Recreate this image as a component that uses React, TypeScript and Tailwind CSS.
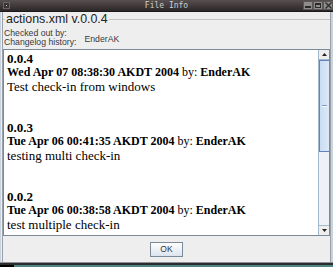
import React from "react";

const entries = [
  { version: "0.0.4", date: "Wed Apr 07 08:38:30 AKDT 2004", author: "EnderAK", message: "Test check-in from windows" },
  { version: "0.0.3", date: "Tue Apr 06 00:41:35 AKDT 2004", author: "EnderAK", message: "testing multi check-in" },
  { version: "0.0.2", date: "Tue Apr 06 00:38:58 AKDT 2004", author: "EnderAK", message: "test multiple check-in" },
];

function TitleBar() {
  return (
    <div className="relative h-[12px] bg-gradient-to-b from-[#585050] to-[#2c2727] border-b border-[#1c1a1a] flex items-center justify-center">
      <div className="absolute left-[3px] top-[2px] w-[7px] h-[7px] bg-[#3a3535] border border-[#6a6464] flex items-center justify-center">
        <div className="w-[1px] h-[1px] bg-[#cfcfcf]" />
      </div>
      <span className="font-['DejaVu_Sans_Mono',monospace] text-[8px] leading-none text-[#cfcfcf]">File Info</span>
      <div className="absolute right-0 top-[1px] flex">
        <div className="w-[10px] h-[9px] bg-[#8f8c8c] border border-[#5a5656] flex items-end justify-center pb-[1px]">
          <div className="w-[6px] h-[2px] bg-[#2a2a2a]" />
        </div>
        <div className="w-[10px] h-[9px] bg-[#8f8c8c] border border-[#5a5656] flex items-center justify-center">
          <div className="w-[6px] h-[5px] border border-[#2a2a2a] border-t-2" />
        </div>
        <div className="w-[10px] h-[9px] bg-[#8f8c8c] border border-[#5a5656] flex items-center justify-center">
          <svg width="7" height="7" viewBox="0 0 7 7">
            <path d="M0.5 0.5 L6.5 6.5 M6.5 0.5 L0.5 6.5" stroke="#2a2a2a" strokeWidth="1.3" />
          </svg>
        </div>
      </div>
    </div>
  );
}

function ScrollBar() {
  return (
    <div className="w-[11px] flex flex-col bg-[#eef2f7] border-l border-[#a3b8cc]">
      <div className="h-[10px] border-b border-[#a3b8cc] bg-[#eeeeee] flex items-center justify-center">
        <svg width="5" height="3" viewBox="0 0 5 3">
          <path d="M2.5 0 L5 3 L0 3 Z" fill="#222" />
        </svg>
      </div>
      <div className="h-[92px] bg-gradient-to-r from-[#c8ddf2] to-[#dde9f5] border-l border-y border-[#6382bf] flex items-center justify-center">
        <div className="w-[5px] h-[2px] border-t border-[#7f9ac6] border-b border-b-white" />
      </div>
      <div className="flex-1" />
      <div className="h-[10px] border-t border-[#a3b8cc] bg-[#eeeeee] flex items-center justify-center">
        <svg width="5" height="3" viewBox="0 0 5 3">
          <path d="M0 0 L5 0 L2.5 3 Z" fill="#222" />
        </svg>
      </div>
    </div>
  );
}

export default function App() {
  return (
    <div className="w-[333px] h-[267px] flex flex-col bg-[#eeeeee] overflow-hidden">
      <TitleBar />
      <div className="flex-1 flex">
        <div className="w-[3px] border-l border-[#c9d3df] border-r border-r-[#9aa0a8] bg-[#eeeeee]" />
        <div className="flex-1 flex flex-col">
          {/* titled border */}
          <div className="h-[15px] flex items-center">
            <div className="w-[2px] h-px bg-[#c4c4c4]" />
            <span className="px-[1px] font-['Liberation_Sans',sans-serif] text-[12.4px] leading-none text-[#222]">
              actions.xml v.0.0.4
            </span>
            <div className="flex-1 h-px bg-[#c4c4c4]" />
          </div>
          <div className="flex pt-[2px] mb-[2px] font-['Liberation_Sans',sans-serif] text-[8.7px] leading-[9px] text-[#3a3a3a]">
            <div className="flex flex-col pl-[1px]">
              <span>Checked out by:</span>
              <span>Changelog history:</span>
            </div>
            <div className="pl-[8px] pt-[6px]">EnderAK</div>
          </div>
          {/* changelog pane */}
          <div className="h-[187px] flex border border-[#7a8a99]">
            <div className="flex-1 bg-white pl-[3px] pt-[2px] overflow-hidden font-['Liberation_Serif',serif] text-black">
              {entries.map((e) => (
                <div key={e.version} className="mb-[27px]">
                  <div className="text-[13px] leading-[13px] font-bold">{e.version}</div>
                  <div className="text-[12px] leading-[14px] whitespace-nowrap">
                    <b>{e.date}</b> by: <b>{e.author}</b>
                  </div>
                  <div className="text-[13px] leading-[15px]">{e.message}</div>
                </div>
              ))}
            </div>
            <ScrollBar />
          </div>
          <div className="flex-1 flex items-center justify-center">
            <button className="w-[33px] h-[15px] border border-[#7a8a99] bg-gradient-to-b from-white to-[#dbe4ee] font-['Liberation_Sans',sans-serif] text-[8.5px] leading-none text-[#333]">
              OK
            </button>
          </div>
        </div>
        <div className="w-[3px] border-l border-[#9aa0a8] bg-[#c9d3df]" />
      </div>
      <div className="h-[5px] flex flex-col">
        <div className="h-px bg-[#8e9298]" />
        <div className="h-[2px] bg-[#2b2b2b]" />
        <div className="flex-1 flex">
          <div className="w-[14px] bg-black" />
          <div className="flex-1 bg-[#4f8585]" />
        </div>
      </div>
    </div>
  );
}
